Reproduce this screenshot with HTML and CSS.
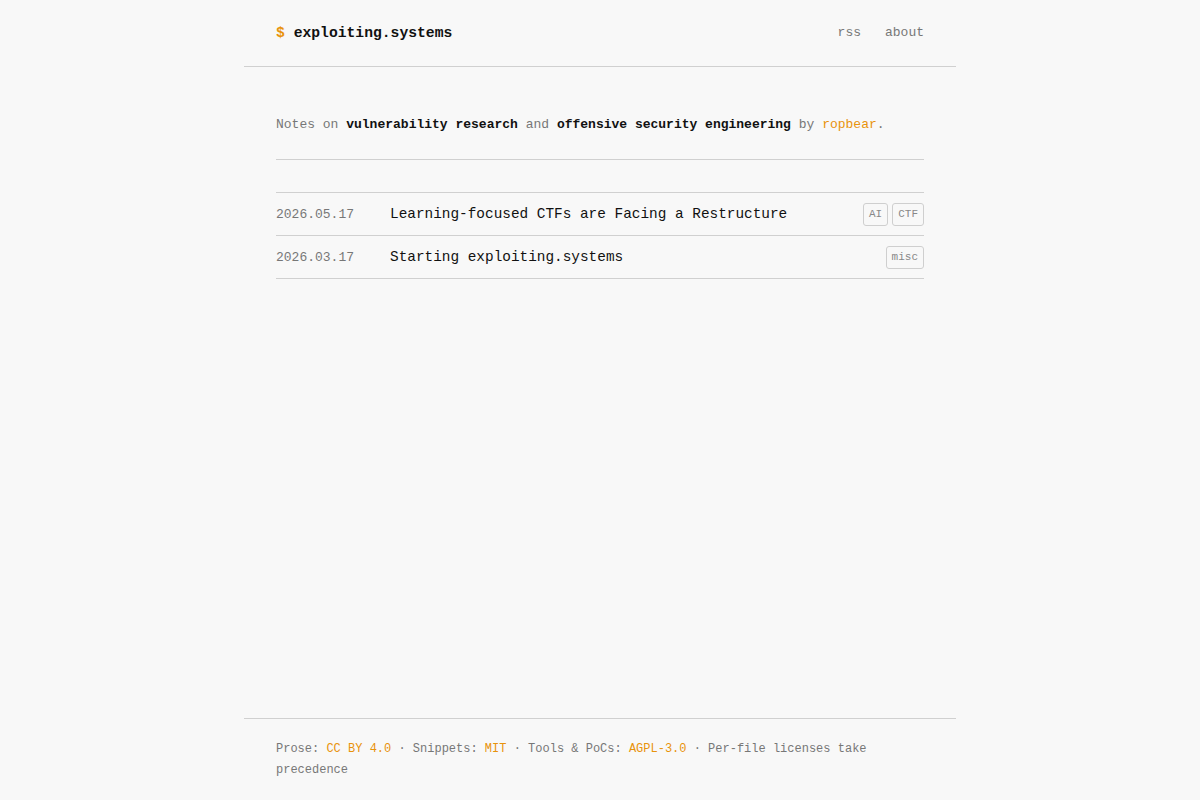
FILE: index.html
```html
<!DOCTYPE html>
<html lang="en">
<head>
  <meta charset="UTF-8">
  <meta name="viewport" content="width=device-width, initial-scale=1.0">
  <title>exploiting.systems</title>
  <link rel="stylesheet" href="styles.css">
</head>
<body>
  <div class="page">
    <header class="site-header">
      <a href="/" class="logo"><span class="prompt">$</span> exploiting.systems</a>
      <nav class="nav">
        <a href="/rss.xml">rss</a>
        <a href="/about/">about</a>
      </nav>
    </header>

    <main class="content">
      <p class="intro">
        Notes on <strong>vulnerability research</strong> and <strong>offensive security engineering</strong> by <a href="/about/" class="accent">ropbear</a>.
      </p>

      <ul class="posts">
        <li class="post">
          <span class="post-date">2026.05.17</span>
          <a href="/posts/learning-focused-ctfs/" class="post-title">Learning-focused CTFs are Facing a Restructure</a>
          <span class="tags">
            <span class="tag">AI</span>
            <span class="tag">CTF</span>
          </span>
        </li>
        <li class="post">
          <span class="post-date">2026.03.17</span>
          <a href="/posts/starting/" class="post-title">Starting exploiting.systems</a>
          <span class="tags">
            <span class="tag">misc</span>
          </span>
        </li>
      </ul>
    </main>

    <footer class="site-footer">
      <p class="license">Prose: <a href="#" class="accent">CC BY 4.0</a> · Snippets: <a href="#" class="accent">MIT</a> · Tools &amp; PoCs: <a href="#" class="accent">AGPL-3.0</a> · Per-file licenses take precedence</p>
    </footer>
  </div>
</body>
</html>
```

FILE: styles.css
```css
body {
  margin: 0;
  background-color: #f8f8f8;
  color: #111;
  font-family: "Liberation Mono", "DejaVu Sans Mono", monospace;
}
a {
  color: inherit;
  text-decoration: none;
}
.page {
  width: 712px;
  margin: 0 auto;
  min-height: 100vh;
  display: flex;
  flex-direction: column;
}

/* header */
.site-header {
  display: flex;
  justify-content: space-between;
  align-items: center;
  padding: 22px 32px;
  border-bottom: 1px solid #d0d0d0;
}
.logo {
  font-size: 14.7px;
  line-height: 22px;
  font-weight: bold;
  color: #111;
}
.prompt {
  color: #e8930c;
}
.nav {
  display: flex;
  gap: 24px;
  font-size: 13px;
  line-height: 22px;
}
.nav a {
  color: #777;
}

/* main */
.content {
  flex: 1;
  padding: 0 32px;
}
.intro {
  margin: 47px 0 0;
  padding-bottom: 23px;
  border-bottom: 1px solid #d0d0d0;
  font-size: 13px;
  line-height: 22px;
  color: #777;
}
.intro strong {
  color: #111;
}
.accent {
  color: #e8930c;
}

.posts {
  list-style: none;
  margin: 32px 0 0;
  padding: 0;
  border-top: 1px solid #d0d0d0;
}
.post {
  display: flex;
  align-items: center;
  padding: 9px 0;
  border-bottom: 1px solid #d0d0d0;
}
.post-date {
  width: 114px;
  flex-shrink: 0;
  font-size: 13px;
  color: #777;
}
.post-title {
  flex: 1;
  font-size: 14.4px;
  line-height: 24px;
  color: #111;
}
.tags {
  display: flex;
  gap: 4px;
}
.tag {
  font-size: 11px;
  line-height: 15px;
  padding: 3px 5px;
  border: 1px solid #cfcfcf;
  border-radius: 3px;
  color: #888;
}

/* footer */
.site-footer {
  padding: 20px 32px 19px;
  border-top: 1px solid #d0d0d0;
}
.license {
  margin: 0;
  font-size: 12px;
  line-height: 21px;
  color: #777;
}
```
